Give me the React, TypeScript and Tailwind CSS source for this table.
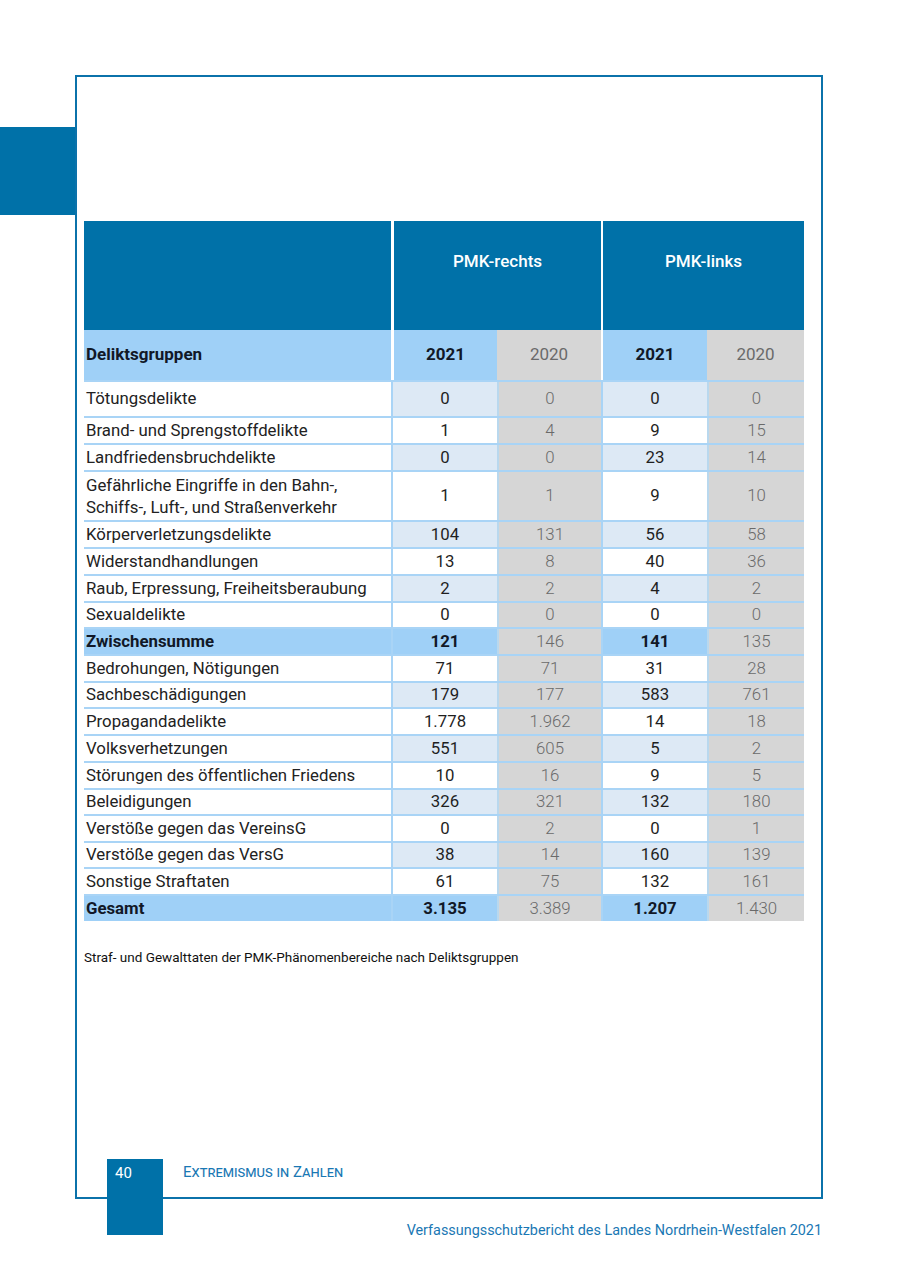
import React from "react";

type Row = {
  label: React.ReactNode;
  r21: string;
  r20: string;
  l21: string;
  l20: string;
  kind: "tint" | "white" | "sum";
  h: string;
};

const rows: Row[] = [
  { label: "Tötungsdelikte", r21: "0", r20: "0", l21: "0", l20: "0", kind: "tint", h: "h-[36px]" },
  { label: "Brand- und Sprengstoffdelikte", r21: "1", r20: "4", l21: "9", l20: "15", kind: "white", h: "h-[27px]" },
  { label: "Landfriedensbruchdelikte", r21: "0", r20: "0", l21: "23", l20: "14", kind: "tint", h: "h-[27px]" },
  {
    label: (
      <span className="leading-[22px]">
        Gefährliche Eingriffe in den Bahn-,
        <br />
        Schiffs-, Luft-, und Straßenverkehr
      </span>
    ),
    r21: "1",
    r20: "1",
    l21: "9",
    l20: "10",
    kind: "white",
    h: "h-[50px]",
  },
  { label: "Körperverletzungsdelikte", r21: "104", r20: "131", l21: "56", l20: "58", kind: "tint", h: "h-[27px]" },
  { label: "Widerstandhandlungen", r21: "13", r20: "8", l21: "40", l20: "36", kind: "white", h: "h-[27px]" },
  { label: "Raub, Erpressung, Freiheitsberaubung", r21: "2", r20: "2", l21: "4", l20: "2", kind: "tint", h: "h-[27px]" },
  { label: "Sexualdelikte", r21: "0", r20: "0", l21: "0", l20: "0", kind: "white", h: "h-[26px]" },
  { label: "Zwischensumme", r21: "121", r20: "146", l21: "141", l20: "135", kind: "sum", h: "h-[27px]" },
  { label: "Bedrohungen, Nötigungen", r21: "71", r20: "71", l21: "31", l20: "28", kind: "white", h: "h-[27px]" },
  { label: "Sachbeschädigungen", r21: "179", r20: "177", l21: "583", l20: "761", kind: "tint", h: "h-[26px]" },
  { label: "Propagandadelikte", r21: "1.778", r20: "1.962", l21: "14", l20: "18", kind: "white", h: "h-[27px]" },
  { label: "Volksverhetzungen", r21: "551", r20: "605", l21: "5", l20: "2", kind: "tint", h: "h-[27px]" },
  { label: "Störungen des öffentlichen Friedens", r21: "10", r20: "16", l21: "9", l20: "5", kind: "white", h: "h-[27px]" },
  { label: "Beleidigungen", r21: "326", r20: "321", l21: "132", l20: "180", kind: "tint", h: "h-[26px]" },
  { label: "Verstöße gegen das VereinsG", r21: "0", r20: "2", l21: "0", l20: "1", kind: "white", h: "h-[27px]" },
  { label: "Verstöße gegen das VersG", r21: "38", r20: "14", l21: "160", l20: "139", kind: "tint", h: "h-[26px]" },
  { label: "Sonstige Straftaten", r21: "61", r20: "75", l21: "132", l20: "161", kind: "white", h: "h-[27px]" },
  { label: "Gesamt", r21: "3.135", r20: "3.389", l21: "1.207", l20: "1.430", kind: "sum", h: "h-[27px]" },
];

function BodyRow({ row }: { row: Row }) {
  const isSum = row.kind === "sum";
  const labelBg = isSum ? "bg-[#9fd0f7]" : "bg-white";
  const numBg = isSum ? "bg-[#9fd0f7]" : row.kind === "tint" ? "bg-[#dde9f5]" : "bg-white";
  const labelText = isSum ? "font-bold text-[#111827]" : "text-[#222222]";
  const numText = isSum ? "font-bold text-[#111827]" : "text-[#1f1f1f]";
  return (
    <div className={`flex border-t-2 border-[#a9d4f6] ${row.h}`}>
      <div className={`w-[307px] flex items-center pl-[2px] text-[16.8px] ${labelBg} ${labelText}`}>{row.label}</div>
      <div className={`w-[106px] flex items-center justify-center border-l-2 border-[#a9d4f6] text-[16.8px] ${numBg} ${numText}`}>{row.r21}</div>
      <div className="w-[104px] flex items-center justify-center border-l-2 border-[#b9d8ee] bg-[#d6d6d6] text-[16.8px] font-light text-[#6a6a6a]">{row.r20}</div>
      <div className={`w-[106px] flex items-center justify-center border-l-2 border-[#a9d4f6] text-[16.8px] ${numBg} ${numText}`}>{row.l21}</div>
      <div className="w-[97px] flex items-center justify-center border-l-2 border-[#b9d8ee] bg-[#d6d6d6] text-[16.8px] font-light text-[#6a6a6a]">{row.l20}</div>
    </div>
  );
}

export default function App() {
  return (
    <div className="w-[900px] h-[1276px] bg-white flex flex-col overflow-hidden" style={{ fontFamily: "Roboto, 'Liberation Sans', sans-serif" }}>
      <div className="flex items-start pt-[75px]">
        <div className="w-[75px] h-[88px] mt-[52px] bg-[#0071a8] shrink-0" />
        <div className="w-[748px] h-[1124px] border-2 border-[#0b72aa] flex flex-col shrink-0">
          {/* Table */}
          <div className="mt-[144px] ml-[7px] w-[720px] flex flex-col">
            <div className="flex h-[109px] bg-[#0071a8]">
              <div className="w-[307px]" />
              <div className="w-[210px] border-l-[3px] border-white flex justify-center pt-[29px] text-[17px] font-medium text-white leading-[22px]">
                PMK-rechts
              </div>
              <div className="w-[203px] border-l-2 border-white flex justify-center pt-[29px] text-[17px] font-medium text-white leading-[22px]">
                PMK-links
              </div>
            </div>
            <div className="flex h-[50px]">
              <div className="w-[307px] bg-[#9fd0f7] flex items-center pl-[2px] text-[17px] font-bold text-[#111827]">Deliktsgruppen</div>
              <div className="w-[106px] border-l-[3px] border-white bg-[#9fd0f7] flex items-center justify-center text-[17px] font-bold text-[#111827]">2021</div>
              <div className="w-[104px] bg-[#d6d6d6] flex items-center justify-center text-[17px] text-[#6a6a6a]">2020</div>
              <div className="w-[106px] border-l-2 border-white bg-[#9fd0f7] flex items-center justify-center text-[17px] font-bold text-[#111827]">2021</div>
              <div className="w-[97px] bg-[#d6d6d6] flex items-center justify-center text-[17px] text-[#6a6a6a]">2020</div>
            </div>
            {rows.map((r, i) => (
              <BodyRow key={i} row={r} />
            ))}
          </div>

          <p className="mt-[28px] ml-[7px] text-[13.5px] leading-[16px] text-[#111111]">
            Straf- und Gewalttaten der PMK-Phänomenbereiche nach Deliktsgruppen
          </p>

          {/* Footer inside frame */}
          <div className="mt-auto h-[38px] flex items-start">
            <div className="ml-[30px] w-[56px] h-[76px] shrink-0 bg-[#0071a8] pl-[8px] pt-[5px] text-[15px] leading-[18px] text-white">40</div>
            <div className="ml-[20px] pt-[4px] text-[15px] leading-[18px] text-[#1a78b4] [font-variant:small-caps]">
              Extremismus in Zahlen
            </div>
          </div>
        </div>
      </div>
      <div className="mt-[23px] pr-[78px] flex justify-end text-[14.4px] leading-[18px] text-[#1a78b4]">
        Verfassungsschutzbericht des Landes Nordrhein-Westfalen 2021
      </div>
    </div>
  );
}
